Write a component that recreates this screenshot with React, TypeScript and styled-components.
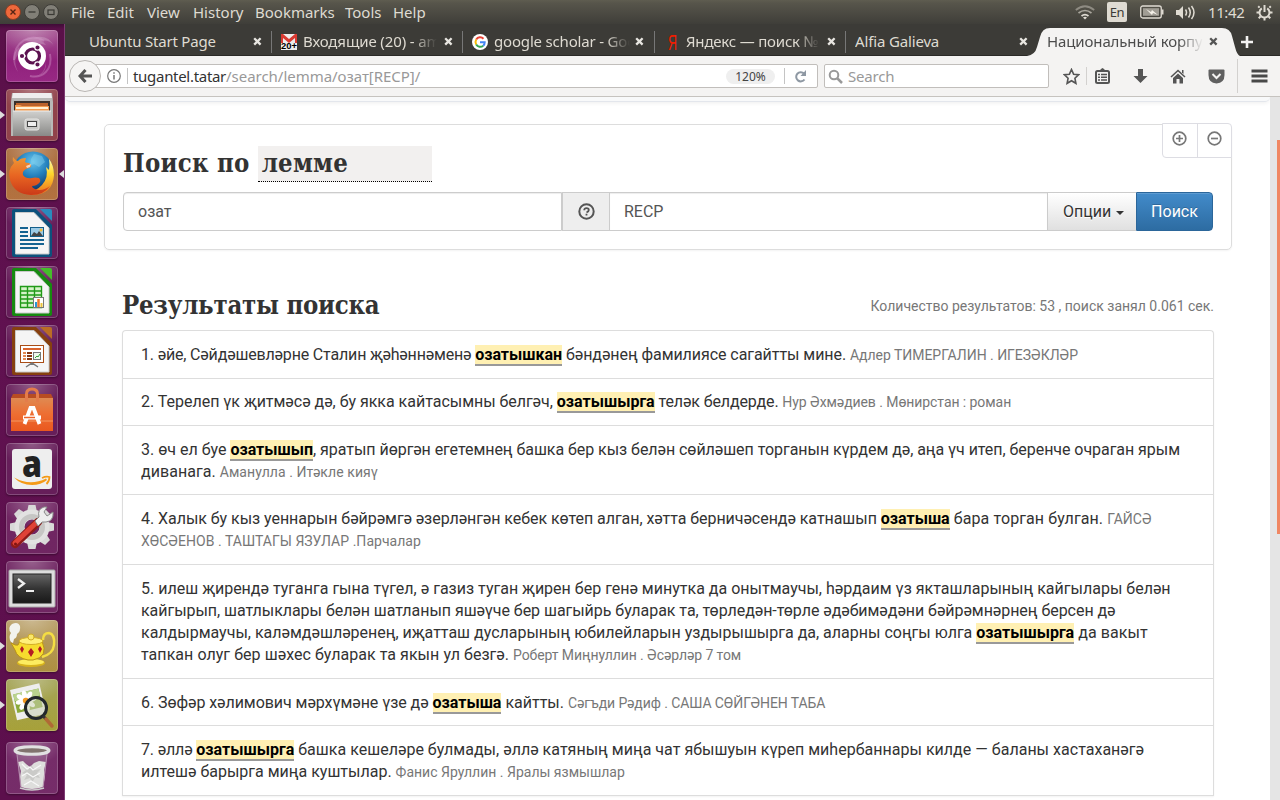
import React from 'react';
import styled, { createGlobalStyle } from 'styled-components';

const Global = createGlobalStyle`
  * { box-sizing: border-box; }
  body { margin: 0; background: #fff; overflow: hidden; font-family: Roboto, sans-serif; }
`;

const ui = '"Noto Sans", "Open Sans", sans-serif';

const Screen = styled.div`
  width: 1280px; height: 800px; display: flex; flex-direction: column; overflow: hidden;
`;
const TopPanel = styled.header`
  height: 24px; flex: none; display: flex; align-items: center; padding: 0 7px 0 5px;
  background: linear-gradient(#5f5d50 0, #57554b 3px, #3f3e39 100%);
  color: #dfdbd2; font: 15px/24px ${ui};
`;
const WindowButtons = styled.div`display: flex; gap: 3px; width: 66px;`;
const MenuItem = styled.span<{ $w: number }>`
  width: ${p => p.$w}px; white-space: nowrap;
`;
const Tray = styled.div`margin-left: auto; display: flex; align-items: center; height: 24px;`;
const LangBadge = styled.span`
  width: 20px; height: 20px; border-radius: 2px; background: #dfdbd2; color: #3c3b37;
  font: 13px/20px ${ui}; text-align: center; margin: 0 13px 0 12px; letter-spacing: -.5px;
`;
const Clock = styled.span`width: 48px; letter-spacing: -.4px;`;
const TrayGap = styled.span<{ $w: number }>`width: ${p => p.$w}px;`;
const Body = styled.div`flex: 1; display: flex; min-height: 0;`;
const Launcher = styled.nav`
  width: 65px; flex: none; padding: 6px 0 0 0; display: flex; flex-direction: column; gap: 7px;
  background: linear-gradient(#3f0c37 0, #5a1049 5px, #601150 40%, #5c0f4c 100%); border-right: 1px solid #7d3b72;
`;
const Slot = styled.div<{ $last?: boolean }>`
  height: 52px; flex: none; display: flex; align-items: center; margin-top: ${p => (p.$last ? 4 : 0)}px;
`;
const Arrow = styled.span<{ $side: 'l' | 'r'; $on?: boolean }>`
  width: 6px; height: 8px; flex: none;
  &::before {
    content: ''; display: ${p => (p.$on ? 'block' : 'none')}; width: 0; height: 0;
    margin-left: ${p => (p.$side === 'r' ? 1 : 0)}px;
    border: 4px solid transparent;
    ${p => (p.$side === 'l' ? 'border-left: 5px solid #ddd; border-right: 0;' : 'border-right: 5px solid #ddd; border-left: 0;')}
  }
`;
const Tile = styled.div<{ $bg: string }>`
  width: 52px; height: 52px; border-radius: 4px; overflow: hidden; flex: none;
  background: radial-gradient(ellipse 60% 45% at 50% 0, rgba(255,255,255,.3), rgba(255,255,255,.04)), ${p => p.$bg};
  box-shadow: inset 0 0 0 1px rgba(255,255,255,.2), 0 1px 2px rgba(0,0,0,.35);
  svg { display: block; }
`;
const Browser = styled.main`flex: 1; min-width: 0; display: flex; flex-direction: column;`;
const TabBar = styled.div`
  height: 32px; flex: none; display: flex; background: #3c3b37; color: #dfdbd2; font: 15px/35px ${ui};
  border-bottom: 1px solid #2b2a27;
`;
const Tab = styled.div<{ $pad: number; $w: number; $sep?: boolean }>`
  width: ${p => p.$w}px; padding-left: ${p => p.$pad}px; display: flex; height: 31px; flex: none; overflow: hidden;
  background: ${p => (p.$sep ? 'linear-gradient(#777,#777) 100% 7px / 1px 22px no-repeat' : 'none')};
`;
const TabIcon = styled.span`display: flex; width: 22px; padding-top: 10px; flex: none;`;
const TabTitle = styled.span<{ $w: number; $fade?: boolean; $ls?: number }>`
  width: ${p => p.$w}px; overflow: hidden; white-space: nowrap; flex: none; letter-spacing: ${p => p.$ls ?? 0}px;
  ${p => (p.$fade ? 'mask-image: linear-gradient(90deg, #000 calc(100% - 24px), transparent);' : '')}
`;
const CloseBox = styled.span<{ $w?: number }>`
  margin-left: auto; width: ${p => p.$w ?? 19}px; padding-top: 13px; display: flex; flex: none;
`;
const ActiveTab = styled.div`
  width: 213px; height: 32px; flex: none; position: relative; color: #4c4c4c; margin-left: -10px;
  > svg { display: block; }
`;
const ActiveLabel = styled.div`
  position: absolute; inset: 0; padding: 0 12px 0 20px; display: flex;
`;
const NewTab = styled.span`padding: 11px 0 0 0; display: flex;`;

const Toolbar = styled.div`
  height: 41px; flex: none; display: flex; align-items: center; background: #f4f3f2; border-bottom: 1px solid #c6c3bf;
  padding: 0 0 0 4px; font: 15px/22px ${ui};
`;
const BackButton = styled.span`
  width: 32px; height: 32px; border-radius: 50%; border: 1px solid #b9b6b3; background: #f6f5f4; z-index: 1;
  display: flex; align-items: center; justify-content: center; flex: none;
`;
const Address = styled.div`
  margin-left: -10px; width: 727px; height: 24px; border: 1px solid #c1bebb; border-radius: 2px; background: #fff;
  display: flex; align-items: center; padding-left: 15px; color: #999; flex: none; white-space: nowrap;
  i { width: 1px; height: 16px; background: #c4c4c4; margin: 0 5px 0 6px; }
  b { color: #333; font-weight: 400; letter-spacing: -.3px; }
`;
const UrlText = styled.span`letter-spacing: -.03px;`;
const Zoom = styled.span`
  margin-left: auto; width: 49px; height: 15px; border-radius: 8px; background: #efefef; color: #444;
  font: 12px/15px ${ui}; text-align: center;
`;
const ReloadDivider = styled.span`width: 1px; height: 16px; background: #c4c4c4; margin: 0 9px 0 9px;`;
const ReloadIcon = styled.svg`margin-right: 10px;`;
const SearchField = styled.div`
  margin-left: 6px; width: 225px; height: 24px; border: 1px solid #c1bebb; border-radius: 2px; background: #fff;
  display: flex; align-items: center; gap: 5px; padding-left: 3px; color: #999; flex: none; letter-spacing: -.2px;
`;
const Tools = styled.div`flex: none; display: flex; align-items: center;`;
const Tool = styled.svg<{ $ml: number }>`margin-left: ${p => p.$ml}px; flex: none;`;
const Rule = styled.span<{ $h: number; $ml: number }>`
  width: 1px; height: ${p => p.$h}px; background: #d3d1cf; margin-left: ${p => p.$ml}px;
`;

const Viewport = styled.div`flex: 1; min-height: 0; display: flex; background: #fff;`;
const Scrollbar = styled.div`
  width: 10px; background: #e5e5e5; padding: 43px 0 0 7px; flex: none;
  &::before { content: ''; display: block; width: 3px; height: 394px; background: #f08763; }
`;
const Page = styled.div`flex: 1; min-width: 0; overflow: hidden; display: flex; flex-direction: column;`;
const NavEdge = styled.div`
  height: 5px; flex: none; background: #f8f9fa; border-bottom: 1px solid #e3e6ec; border-radius: 0 0 5px 5px;
  box-shadow: 0 1px 4px rgba(0,0,0,.07);
`;
const SearchCard = styled.section`
  margin: 22px 38px 0 39px; height: 126px; flex: none; border: 1px solid #ddd; border-radius: 5px;
  box-shadow: 0 1px 2px rgba(0,0,0,.05); padding: 21px 18px 0 18px; position: relative;
`;
const SizeButtons = styled.div`
  position: absolute; right: -1px; top: -2px; height: 35px; width: 70px; display: flex; background: #fff;
  border: 1px solid #dddde3; border-radius: 0 4px 0 4px;
  span { flex: 1; display: flex; justify-content: center; padding-top: 7px; }
  span + span { border-left: 1px solid #dddde3; }
`;
const Heading = styled.h2<{ $ls?: number }>`
  margin: 0; color: #333; font: bold 25.5px/35px "DejaVu Serif Condensed", "DejaVu Serif", serif; font-stretch: condensed;
  letter-spacing: ${p => p.$ls ?? 0.15}px; white-space: nowrap; display: flex;
`;
const ModeSelect = styled.span`
  width: 174px; height: 36px; margin-left: 8px; padding-left: 4px; background: #f2f0ef; border-bottom: 1px dotted #000;
`;
const InputGroup = styled.div`
  display: flex; height: 39px; margin-top: 10px; font-size: 16px; line-height: 37px; color: #555;
  > * { flex: none; }
`;
const Input = styled.div<{ $w: number; $first?: boolean }>`
  width: ${p => p.$w}px; border: 1px solid #ccc; padding-left: 14px; border-radius: ${p => (p.$first ? '4px 0 0 4px' : 0)};
  box-shadow: inset 0 1px 1px rgba(0,0,0,.075);
`;
const Addon = styled.div`
  width: 47px; background: #eee; border: 1px solid #ccc; border-width: 1px 0 1px 1px; display: flex; align-items: center; justify-content: center;
`;
const OptionsButton = styled.div`
  width: 88px; border: 1px solid #ccc; border-width: 1px 0; color: #333; padding-left: 15px; text-shadow: 0 1px 0 #fff;
  background: linear-gradient(#fff, #e0e0e0); display: flex; align-items: center; gap: 5px;
  &::after { content: ''; border: 4px solid transparent; border-top-color: #333; border-bottom: 0; margin-top: 2px; }
`;
const SubmitButton = styled.div`
  width: 77px; border: 1px solid #2b669a; border-radius: 0 4px 4px 0; color: #fff; text-align: center;
  background: linear-gradient(#428bca, #2d6ca2); text-shadow: 0 -1px 0 rgba(0,0,0,.2); box-shadow: inset 0 1px 0 rgba(255,255,255,.15);
`;
const ResultsHead = styled.div`
  margin: 38px 56px 0 57px; height: 42px; flex: none; display: flex; justify-content: space-between; color: #777; font-size: 14px; line-height: 37px;
`;
const ResultsList = styled.section`
  margin: 0 56px 0 57px; border: 1px solid #ddd; border-bottom: 0; border-radius: 4px 4px 0 0; flex: none; box-shadow: 0 1px 2px rgba(0,0,0,.05);
`;
const ResultRow = styled.article<{ $h: number; $pt?: number }>`
  height: ${p => p.$h}px; border-bottom: 1px solid #ddd; padding: ${p => p.$pt ?? 0}px 18px 0; display: flex; flex-direction: column; justify-content: center;
`;
const Line = styled.p<{ $ls?: number }>`
  margin: 0; font-size: 16px; line-height: 22px; color: #333; white-space: pre; letter-spacing: ${p => p.$ls ?? 0}px;
`;
const Run = styled.span<{ $ls: number }>`letter-spacing: ${p => p.$ls}px;`;
const Hit = styled.mark`background: #fff0b3; color: #000; font-weight: 700; border-bottom: 2px solid #999; letter-spacing: 0;`;
const Source = styled.small<{ $ls?: number }>`font-size: 14px; color: #777; letter-spacing: ${p => p.$ls ?? 0}px;`;

const Close = ({ c }: { c: string }) => (
  <svg width="9" height="9" viewBox="0 0 9 9"><path d="M1.2 1.2l6.4 6.4M7.6 1.2L1.2 7.6" stroke={c} strokeWidth="2.3" /></svg>
);

const Doc = ({ c, l, children }: { c: string; l: string; children: React.ReactNode }) => (
  <svg width="52" height="52" viewBox="0 0 52 52">
    <path d="M8 2h22l16 16v30q0 2-2 2H8q-2 0-2-2V4q0-2 2-2z" fill={c} />
    <path d="M34 2h10q2 0 2 2v10z" fill={l} />
    <path d="M9.500 5.500h18.500l15 15.500v26H9.500z" fill="#f5f5f5" stroke="#c9c9c9" />
    {children}
  </svg>
);

const gearTeeth = [0, 45, 90, 135, 180, 225, 270, 315];

const icons: { bg: string; left?: boolean; right?: boolean; art: React.ReactNode }[] = [
  {
    bg: 'linear-gradient(#a3508f, #8c1877 60%, #94207f)', art: (
      <svg width="52" height="52" viewBox="0 0 52 52" fill="none">
        <path d="M26 8q17-5 22 9-3-9-17-6M13 17Q2 28 12 42q-7-15 4-20M40 30q0 17-18 18 16-1 18-12M18 10Q30 3 40 15" fill="#fff" opacity=".2" />
        <path d="M8 30C8 12 24 2 38 11M44 24c3 15-7 25-20 22" stroke="#d89bce" strokeWidth="2" opacity=".4" />
        <circle cx="26" cy="26" r="14" fill="#fff" />
        <circle cx="26.500" cy="26" r="7" stroke="#5c1250" strokeWidth="3.200" />
        <g stroke="#fff" strokeWidth="1.200"><path d="M20 26h-7M29.500 20l4-6M29.500 32l4 6" />
          <circle cx="16" cy="26" r="2.700" fill="#5c1250" /><circle cx="31.500" cy="17.500" r="2.700" fill="#5c1250" /><circle cx="31.500" cy="34.500" r="2.700" fill="#5c1250" /></g>
      </svg>),
  },
  {
    bg: '#8c3b44', left: true, art: (
      <svg width="52" height="52" viewBox="0 0 52 52">
        <defs><linearGradient id="cab" x2="0" y2="1"><stop stopColor="#d0d0ce" /><stop offset="1" stopColor="#898987" /></linearGradient></defs>
        <path d="M6 4h40l1 9v34H5V13z" fill="#b9b9b7" /><path d="M7 4h38l1 5H6z" fill="#eee" />
        <path d="M8 12h36v12H8z" fill="#3b302a" /><path d="M10 14h32v6H10z" fill="#ba622c" /><path d="M9 16h5l2 1h27v6H9z" fill="#f29b51" /><path d="M10 18h32v2H10z" fill="#fff1d5" />
        <path d="M7 22h38v25H7z" fill="url(#cab)" /><path d="M7 22h38" stroke="#eee" />
        <rect x="19" y="30" width="14" height="11" rx="2" fill="#c8c8c6" stroke="#e7e7e5" /><rect x="21.500" y="32.500" width="9" height="5" fill="#eee" stroke="#444" />
      </svg>),
  },
  {
    bg: 'linear-gradient(#a66736, #b06c38)', left: true, right: true, art: (
      <svg width="52" height="52" viewBox="0 0 52 52">
        <defs>
          <radialGradient id="globe" cx=".5" cy=".25" r=".7"><stop stopColor="#67c4ec" /><stop offset=".5" stopColor="#2380bd" /><stop offset="1" stopColor="#123667" /></radialGradient>
          <linearGradient id="fox" x2="0" y2="1"><stop stopColor="#ee9a36" /><stop offset=".5" stopColor="#e86522" /><stop offset="1" stopColor="#cb3a18" /></linearGradient>
          <linearGradient id="tail" x2="0" y2="1"><stop stopColor="#fff6a8" /><stop offset=".4" stopColor="#ffd72d" /><stop offset="1" stopColor="#ee6c1d" /></linearGradient>
        </defs>
        <circle cx="27" cy="24" r="20.500" fill="url(#globe)" />
        <path d="M28 6l8 2 3 6-6 5-5-3-4 2 1-7z" fill="#8ed8ef" opacity=".4" />
        <path d="M43 11q5 6 5 16Q47 46 27 47q-8 0-14-5 15 4 23-5 7-8 4-18l3 3q1-6 0-11z" fill="url(#tail)" />
        <path d="M7 8q-1 4 1 7Q1 22 4 32q4 14 21 15 13 0 19-9-8 6-15 3-3-1-3-3 5 0 8-4 1-2-1-4-4-1-7 0-6 1-9-3-1-4 3-6l5-2q1-2-2-4-3 0-4-1l1-4q-6 0-8 3-2 0-5-4z" fill="url(#fox)" />
        <path d="M20 18l5-2-1 3-3 1z" fill="#f7d5bd" />
      </svg>),
  },
  {
    bg: '#601553', art: (
      <Doc c="#0c517c" l="#2a8bbd">
        <path d="M14 21h8M14 25h8M14 29h8M14 33h24M14 37h24M14 41h18" stroke="#156391" strokeWidth="2" />
        <rect x="24.500" y="20.500" width="13" height="9" fill="#9ccbe6" stroke="#145f8a" /><path d="M25 29l3-4 3 2 2-3 4 5z" fill="#444" /><circle cx="35" cy="23" r="1.500" fill="#f4bb36" />
      </Doc>),
  },
  {
    bg: '#601553', art: (
      <Doc c="#168a10" l="#45bd2b">
        <path d="M14.500 20.500h21v21h-21zM14 25h22M14 29h22M14 33h22M14 37h22M21.500 21v20M28.500 21v20" fill="#d6f3c9" stroke="#219a18" strokeWidth="1.400" />
        <rect x="27.500" y="31.500" width="10" height="10" fill="#fff" stroke="#777" /><path d="M30 36v5" stroke="#2997d5" strokeWidth="2" /><path d="M32.500 33v8" stroke="#ef792b" strokeWidth="2.500" /><path d="M35.500 37v4" stroke="#ebc33a" strokeWidth="2" />
      </Doc>),
  },
  {
    bg: '#601553', art: (
      <Doc c="#86400f" l="#ba6d25">
        <rect x="14.500" y="20.500" width="23" height="17" fill="#fff" stroke="#a94d16" /><path d="M17 24h18" stroke="#d9642d" strokeWidth="2" />
        <path d="M17 28h3M17 31h3M17 34h3" stroke="#e28952" strokeWidth="2" /><path d="M21 28h5M21 31h5M21 34h5" stroke="#853812" strokeWidth="2" />
        <rect x="27.500" y="27.500" width="7" height="7" fill="#eef8ec" stroke="#777" /><path d="M29 33l2-2 1 1 2-3" stroke="#35a23a" fill="none" /><path d="M20 42l6-4 6 4M26 38v2" stroke="#777" strokeWidth="1.500" fill="none" />
      </Doc>),
  },
  {
    bg: '#601553', art: (
      <svg width="52" height="52" viewBox="0 0 52 52">
        <defs><linearGradient id="bag" x2="0" y2="1"><stop stopColor="#df8a52" /><stop offset=".5" stopColor="#ee6d31" /><stop offset="1" stopColor="#e9581f" /></linearGradient></defs>
        <path d="M7 10h38l2 4H5z" fill="#b84c22" /><path d="M5 14h42v33H5z" fill="url(#bag)" /><path d="M5 37h42" stroke="#f29762" />
        <path d="M20.500 18V10q0-5 5.500-5t5.500 5v8" fill="none" stroke="#e47c4b" strokeWidth="3" />
        <path d="M18.500 40l6-16h3l6 16" fill="none" stroke="#fff" strokeWidth="3.800" /><path d="M17 31.500h18v4H17z" fill="#fff" /><path d="M18 33.500h11" stroke="#ed642a" strokeWidth="1.400" />
      </svg>),
  },
  {
    bg: '#601553', art: (
      <svg width="52" height="52" viewBox="0 0 52 52">
        <rect x="6" y="6" width="40" height="40" rx="3" fill="#eee" /><text x="16" y="33.500" fontFamily="Open Sans" fontWeight="800" fontSize="37" textLength="20" lengthAdjust="spacingAndGlyphs" fill="#222">a</text>
        <path d="M8 34.500q16 9 32 1l1 1.500q-6 5-15 5-11 0-18-7.500z" fill="#f49a17" /><path d="M36 35q4-2 7.500-1 0 4-3 7" fill="none" stroke="#f49a17" strokeWidth="1.800" />
      </svg>),
  },
  {
    bg: '#6a1d5c', art: (
      <svg width="52" height="52" viewBox="0 0 52 52">
        <g fill="#d9d9d8">{gearTeeth.map(a => <path key={a} d="M21 10l1.500-7h7l1.500 7z" transform={`rotate(${a} 26 25)`} />)}</g>
        <circle cx="26" cy="25" r="12.500" fill="none" stroke="#e2e2e1" strokeWidth="10" /><circle cx="26" cy="25" r="10.500" fill="none" stroke="#c6c6c4" strokeWidth="5" />
        <path d="M9 42L32 20" stroke="#8f1a18" strokeWidth="8" strokeLinecap="round" /><path d="M9 41L31 20" stroke="#df4237" strokeWidth="5" strokeLinecap="round" />
        <path d="M29 19l4-4q-2-8 5-10l3 0-3 5 3 4 6-4q1 9-7 10l-4 0-4 4z" fill="#eee" stroke="#8a8a8a" /><circle cx="9.500" cy="42" r="1.500" fill="#7e1410" />
      </svg>),
  },
  {
    bg: '#6a1d5c', art: (
      <svg width="52" height="52" viewBox="0 0 52 52">
        <defs><linearGradient id="term" x2="0" y2="1"><stop stopColor="#666" /><stop offset=".5" stopColor="#343434" /><stop offset="1" stopColor="#181818" /></linearGradient></defs>
        <rect x="3" y="9" width="46" height="37" rx="1" fill="#ddd" stroke="#aaa" /><rect x="7" y="13" width="38" height="29" fill="url(#term)" stroke="#222" />
        <path d="M12 18l6 4.500-6 4.500" fill="none" stroke="#eee" strokeWidth="2.300" /><path d="M20 30h8" stroke="#eee" strokeWidth="2" />
      </svg>),
  },
  {
    bg: 'linear-gradient(#b59a61, #aa8b38)', left: true, art: (
      <svg width="52" height="52" viewBox="0 0 52 52">
        <path d="M5 22q-3-5 0-9-4-5 1-9 6-3 8 2 1 5-3 8 0 4-3 5l-1 4z" fill="#f2f2ee" />
        <path d="M37 20q0-7 6-7 6 1 5 12-1 9-12 12" fill="none" stroke="#f4dd43" strokeWidth="2.500" />
        <ellipse cx="25" cy="43" rx="14" ry="4" fill="#d8b31c" /><ellipse cx="25" cy="42" rx="13" ry="3" fill="#fcec60" />
        <path d="M5 23q5 3 7 2l2-4q11-6 22 0 7 16-9 19h-5Q11 38 9 30z" fill="#f6dc2e" stroke="#ba9216" /><ellipse cx="25" cy="21" rx="12" ry="3.500" fill="#fff07a" stroke="#d3ae24" /><circle cx="25" cy="17" r="3" fill="#f9e86b" stroke="#d3ae24" />
        <path d="M16 26l2 3-2 4-2-4zM25 28l3 4-3 5-3-5zM34 26l2 3-2 4-2-4z" fill="#b51c24" />
      </svg>),
  },
  {
    bg: 'linear-gradient(#a0a052, #a39d31)', left: true, art: (
      <svg width="52" height="52" viewBox="0 0 52 52">
        <g transform="rotate(-13 23 22)"><path d="M7 7h30v31H7z" fill="#eee" /><path d="M9 12h26v19H9z" fill="#89a93a" /><path d="M9 12h26v7H9z" fill="#b9d38f" />
          <g fill="#fff">{gearTeeth.map(a => <ellipse key={a} cx="20" cy="15.500" rx="2.500" ry="5" transform={`rotate(${a} 20 21)`} />)}</g><circle cx="20" cy="21" r="3" fill="#f29a22" /></g>
        <circle cx="30" cy="29" r="10.500" fill="#c8d0b0" fillOpacity=".55" stroke="#23282b" strokeWidth="3" /><path d="M37 37l3 3" stroke="#333" strokeWidth="3" /><path d="M40 40l6 7" stroke="#b06a35" strokeWidth="3.500" strokeLinecap="round" />
      </svg>),
  },
  {
    bg: '#702463', art: (
      <svg width="52" height="52" viewBox="0 0 52 52">
        <path d="M10 8h32l-4 36q-12 5-24 0z" fill="#ddd" opacity=".2" />
        <path d="M12 20l5-1 3 3 4 3 4-4 5-2 7 1-2 8 1 6-2 11q-11 4-22 0l-1-10 1-6z" fill="#dededc" />
        <path d="M15 24l5 4-4 3 5 2-3 5 6-2 2 5 3-6 5 1-3-5 4-4-6 1-4-5-3 5z" fill="#bcbcba" opacity=".6" />
        <path d="M16 22l5 5 3-2 3 3 8-5M16 34l5-3 6 4 7-4M18 43l7-4 8 5" fill="none" stroke="#f8f8f8" strokeWidth="1.200" />
        <path d="M11 12l4 33M41 12l-4 33" stroke="#b58fae" fill="none" />
        <ellipse cx="26" cy="8.500" rx="17" ry="3.800" fill="#81736e" stroke="#e1e1e1" strokeWidth="3" /><path d="M14 46q12 4 24 0" stroke="#ccc" fill="none" strokeWidth="1.600" />
      </svg>),
  },
];

const menus: [string, number][] = [['File', 36], ['Edit', 40], ['View', 46], ['History', 62], ['Bookmarks', 90], ['Tools', 48], ['Help', 40]];

const ZoomGlyph = ({ plus }: { plus?: boolean }) => (
  <svg width="15" height="15" viewBox="0 0 15 15" fill="none" stroke="#777" strokeWidth="1.700"><circle cx="7.500" cy="7.500" r="6.300" /><path d={plus ? 'M4 7.500h7M7.500 4v7' : 'M4 7.500h7'} /></svg>
);

export default function App() {
  return (
    <Screen>
      <Global />
      <TopPanel>
        <WindowButtons>
          <svg width="16" height="16" viewBox="0 0 16 16"><circle cx="8" cy="8" r="7.500" fill="#ee683b" stroke="#8b3d23" /><path d="M5.500 5.500l5 5M10.500 5.500l-5 5" stroke="#552414" strokeWidth="1.400" /></svg>
          <svg width="16" height="16" viewBox="0 0 16 16"><circle cx="8" cy="8" r="7.500" fill="#817f77" stroke="#3e3d38" /><path d="M4.500 8h7" stroke="#3a3934" strokeWidth="1.300" /></svg>
          <svg width="16" height="16" viewBox="0 0 16 16"><circle cx="8" cy="8" r="7.500" fill="#817f77" stroke="#3e3d38" /><rect x="5" y="6" width="6" height="4.500" fill="none" stroke="#3a3934" strokeWidth="1.200" /></svg>
        </WindowButtons>
        {menus.map(m => <MenuItem key={m[0]} $w={m[1]}>{m[0]}</MenuItem>)}
        <Tray>
          <svg width="20" height="15" viewBox="0 0 20 15" fill="none"><path d="M.8 5q9.200-7.500 18.400 0" stroke="#8e8b82" strokeWidth="1.700" /><path d="M3.500 8q6.500-5 13 0" stroke="#aaa79e" strokeWidth="1.700" /><path d="M6.500 11q3.500-2.700 7 0" stroke="#dfdbd2" strokeWidth="1.700" /><path d="M8 12.500q2-1.500 4 0l-2 2z" fill="#dfdbd2" /></svg>
          <LangBadge>En</LangBadge>
          <svg width="24" height="14" viewBox="0 0 24 14"><rect x=".75" y="1" width="20.500" height="12" rx="2" fill="none" stroke="#dfdbd2" strokeWidth="1.300" /><path d="M3 3.200h16v7.600H3z" fill="#a09d94" /><path d="M22.500 4.500v5" stroke="#dfdbd2" strokeWidth="2" /><path d="M6 4l5 3 1-2 6 5-5-2-1 2z" fill="#f4f1e8" /></svg>
          <TrayGap $w={11} />
          <svg width="21" height="15" viewBox="0 0 21 15" fill="none" stroke="#dfdbd2" strokeWidth="1.500"><path d="M1 5h3l4-4v13l-4-4H1z" fill="#dfdbd2" stroke="none" /><path d="M10.500 4.500q2 3 0 6M13.500 2.500q3.500 5 0 10M16.500 1q5 6.500 0 13" /></svg>
          <TrayGap $w={12} />
          <Clock>11:42</Clock>
          <svg width="17" height="17" viewBox="0 0 17 17" fill="none" stroke="#dfdbd2"><path d="M5.800 4.300a5 5 0 1 0 5.400 0" strokeWidth="2" /><path d="M8.500 1v7" strokeWidth="2" /><path d="M3.600 3.600L2.200 2.200M13.400 3.600l1.400-1.400M3 8.500H.5M14 8.500h2.500M4.500 12.500l-1.800 1.800M12.500 12.500l1.800 1.800M8.500 14v2.500" strokeWidth="2" /></svg>
        </Tray>
      </TopPanel>
      <Body>
        <Launcher>
          {icons.map((it, i) => (
            <Slot key={i} $last={i === icons.length - 1}>
              <Arrow $side="l" $on={it.left} /><Tile $bg={it.bg}>{it.art}</Tile><Arrow $side="r" $on={it.right} />
            </Slot>
          ))}
        </Launcher>
        <Browser>
          <TabBar>
            <Tab $w={207} $pad={24} $sep><TabTitle $w={140} $ls={-.2}>Ubuntu Start Page</TabTitle><CloseBox><Close c="#e8e6e1" /></CloseBox></Tab>
            <Tab $w={191} $pad={9} $sep>
              <TabIcon><svg width="16" height="16" viewBox="0 0 16 16"><path d="M0 0h16v16H0z" fill="#eee" /><path d="M0 0h2l6 5 6-5h2v9h-2V4L8 9 2 4v5H0z" fill="#d93a32" /><text x="0" y="15" fontFamily="Liberation Sans" fontSize="9" fontWeight="700" textLength="16" lengthAdjust="spacingAndGlyphs">20+</text></svg></TabIcon>
              <TabTitle $w={134} $fade $ls={-.12}>Входящие (20) - am</TabTitle><CloseBox><Close c="#e8e6e1" /></CloseBox>
            </Tab>
            <Tab $w={192} $pad={9} $sep>
              <TabIcon><svg width="16" height="16" viewBox="0 0 16 16"><circle cx="8" cy="8" r="8" fill="#fff" /><g fill="none" strokeWidth="2"><path d="M4.200 5.500A4.700 4.700 0 0 1 11.500 4.700" stroke="#e94235" /><path d="M4.200 5.500a5 5 0 0 0 0 5" stroke="#fbbc05" /><path d="M4.200 10.500a4.700 4.700 0 0 0 7 1.200" stroke="#34a853" /><path d="M11.200 11.700q1.500-1.200 1.500-3.500H8" stroke="#4285f4" /></g></svg></TabIcon>
              <TabTitle $w={136} $fade $ls={-.18}>google scholar - Goo</TabTitle><CloseBox $w={20}><Close c="#e8e6e1" /></CloseBox>
            </Tab>
            <Tab $w={191} $pad={9} $sep>
              <TabIcon><svg width="16" height="16" viewBox="0 0 16 16"><text x="4" y="16" fontFamily="Liberation Sans" fontSize="22" textLength="9" lengthAdjust="spacingAndGlyphs" fill="#f21d00">Я</text></svg></TabIcon>
              <TabTitle $w={134} $fade $ls={-.2}>Яндекс — поиск №</TabTitle><CloseBox><Close c="#e8e6e1" /></CloseBox>
            </Tab>
            <Tab $w={191} $pad={9}><TabTitle $w={120} $ls={-.15}>Alfia Galieva</TabTitle><CloseBox $w={18}><Close c="#e8e6e1" /></CloseBox></Tab>
            <ActiveTab>
              <svg width="213" height="32" viewBox="0 0 213 32"><path d="M0 32q8-1 10-9l3-10q2-9 10-9h172q8 0 10 8l3 11q2 8 5 9z" fill="#f4f3f2" /></svg>
              <ActiveLabel><TabTitle $w={156} $fade $ls={-.12}>Национальный корпу</TabTitle><CloseBox><Close c="#555" /></CloseBox></ActiveLabel>
            </ActiveTab>
            <NewTab><svg width="14" height="14" viewBox="0 0 14 14"><path d="M7 1v12M1 7h12" stroke="#f4f3f2" strokeWidth="2.600" /></svg></NewTab>
          </TabBar>
          <Toolbar>
            <BackButton><svg width="14" height="14" viewBox="0 0 14 14" fill="none" stroke="#555" strokeWidth="3"><path d="M7.500 1L2 7l5.500 6M2.500 7H14" /></svg></BackButton>
            <Address>
              <svg width="14" height="14" viewBox="0 0 14 14" fill="none" stroke="#777"><circle cx="7" cy="7" r="6.300" strokeWidth="1.200" /><path d="M7 6v4.500M7 3.200v1.500" strokeWidth="1.500" /></svg>
              <i /><UrlText><b>tugantel.tatar</b>/search/lemma/озат[RECP]/</UrlText>
              <Zoom>120%</Zoom><ReloadDivider />
              <ReloadIcon width="13" height="13" viewBox="0 0 13 13" fill="none"><path d="M10.500 9.500A4.600 4.600 0 1 1 10 3.500" stroke="#8e98a3" strokeWidth="2" /><path d="M12 0v6H6.500z" fill="#8e98a3" /></ReloadIcon>
            </Address>
            <SearchField><svg width="15" height="15" viewBox="0 0 15 15" fill="none" stroke="#999" strokeWidth="2"><circle cx="6" cy="6" r="4.300" /><path d="M9 9l5 5" strokeWidth="2.500" /></svg>Search</SearchField>
            <Tools>
              <Tool $ml={14} width="17" height="17" viewBox="0 0 17 17"><path d="M8.500 1.500l2.100 4.700 5.100.5-3.800 3.500 1 5.100-4.400-2.600-4.400 2.600 1-5.100L1.300 6.700l5.100-.5z" fill="none" stroke="#555" strokeWidth="1.600" /></Tool>
              <Rule $h={18} $ml={6} />
              <Tool $ml={8} width="15" height="16" viewBox="0 0 15 16"><rect x="1" y="3" width="13" height="12" rx="1.500" fill="none" stroke="#555" strokeWidth="2" /><path d="M5 3q0-2 2.500-3Q10 1 10 3z" fill="#555" /><path d="M3 6.500h2M6 6.500h6M3 9.200h2M6 9.200h6M3 12h2M6 12h6" stroke="#555" strokeWidth="1.500" /></Tool>
              <Tool $ml={23} width="15" height="15" viewBox="0 0 15 15"><path d="M5 0h5v7h4.500L7.500 14 .5 7H5z" fill="#555" /></Tool>
              <Tool $ml={22} width="16" height="15" viewBox="0 0 16 15"><path d="M1 8l7-6.500L15 8" fill="none" stroke="#555" strokeWidth="1.600" /><path d="M8 4.500l5 4.500v5.500H9.500V10h-3v4.500H3V9z" fill="#555" /><path d="M12 1h1.500v4L12 3.500z" fill="#555" /></Tool>
              <Tool $ml={22} width="17" height="15" viewBox="0 0 17 15"><path d="M1.500.5h14q1 0 1 1V6q0 8-8 8.500Q.5 14 .5 6V1.500q0-1 1-1z" fill="#606060" /><path d="M4.500 5l4 4 4-4" fill="none" stroke="#f4f3f2" strokeWidth="2" /></Tool>
              <Rule $h={34} $ml={12} />
              <Tool $ml={13} width="17" height="14" viewBox="0 0 17 14"><path d="M.5 2h16M.5 7h16M.5 12h16" stroke="#484848" strokeWidth="2.800" /></Tool>
            </Tools>
          </Toolbar>
          <Viewport>
            <Page>
              <NavEdge />
              <SearchCard>
                <SizeButtons><span><ZoomGlyph plus /></span><span><ZoomGlyph /></span></SizeButtons>
                <Heading $ls={.25}>Поиск по<ModeSelect>лемме</ModeSelect></Heading>
                <InputGroup>
                  <Input $w={439} $first>озат</Input>
                  <Addon><svg width="17" height="17" viewBox="0 0 17 17" fill="none" stroke="#555" strokeWidth="2"><circle cx="8.500" cy="8.500" r="7.200" /><path d="M6.200 7.200q0-2 2.300-2t2.300 1.800Q10.800 8.500 8.500 9.500M8.500 10.800v1.700" strokeWidth="1.800" /></svg></Addon>
                  <Input $w={439}>RECP</Input>
                  <OptionsButton>Опции</OptionsButton>
                  <SubmitButton>Поиск</SubmitButton>
                </InputGroup>
              </SearchCard>
              <ResultsHead><Heading as="h3" $ls={-.25}>Результаты поиска</Heading><span>Количество результатов: 53 , поиск занял 0.061 сек.</span></ResultsHead>
              <ResultsList>
                <ResultRow $h={48}>
                  <Line><Run $ls={-.17}>1. әйе, Сәйдәшевләрне Сталин җәһәннәменә </Run><Hit>озатышкан</Hit><Run $ls={-.06}> бәндәнең фамилиясе сагайтты мине. </Run><Source $ls={-.03}>Адлер ТИМЕРГАЛИН . ИГЕЗӘКЛӘР</Source></Line>
                </ResultRow>
                <ResultRow $h={47}>
                  <Line><Run $ls={-.02}>2. Терелеп үк җитмәсә дә, бу якка кайтасымны белгәч, </Run><Hit>озатышырга</Hit><Run $ls={-.12}> теләк белдерде. </Run><Source $ls={-.07}>Нур Әхмәдиев . Мөнирстан : роман</Source></Line>
                </ResultRow>
                <ResultRow $h={69} $pt={2}>
                  <Line>3. өч ел буе <Hit>озатышып</Hit><Run $ls={-.045}>, яратып йөргән егетемнең башка бер кыз белән сөйләшеп торганын күрдем дә, аңа үч итеп, беренче очраган ярым</Run></Line>
                  <Line $ls={.04}>диванага. <Source $ls={.08}>Аманулла . Итәкле кияү</Source></Line>
                </ResultRow>
                <ResultRow $h={70}>
                  <Line><Run $ls={-.045}>4. Халык бу кыз уеннарын бәйрәмгә әзерләнгән кебек көтеп алган, хәтта берничәсендә катнашып </Run><Hit>озатыша</Hit><Run $ls={.1}> бара торган булган. </Run><Source>ГАЙСӘ</Source></Line>
                  <Line><Source $ls={.03}>ХӨСӘЕНОВ . ТАШТАГЫ ЯЗУЛАР .Парчалар</Source></Line>
                </ResultRow>
                <ResultRow $h={114}>
                  <Line $ls={.008}>5. илеш җирендә туганга гына түгел, ә газиз туган җирен бер генә минутка да онытмаучы, һәрдаим үз якташларының кайгылары белән</Line>
                  <Line $ls={-.04}>кайгырып, шатлыклары белән шатланып яшәүче бер шагыйрь буларак та, төрледән-төрле әдәбимәдәни бәйрәмнәрнең берсен дә</Line>
                  <Line>калдырмаучы, каләмдәшләренең, иҗатташ дусларының юбилейларын уздырышырга да, аларны соңгы юлга <Hit>озатышырга</Hit><Run $ls={.08}> да вакыт</Run></Line>
                  <Line $ls={.05}>тапкан олуг бер шәхес буларак та якын ул безгә. <Source $ls={-.08}>Роберт Миңнуллин . Әсәрләр 7 том</Source></Line>
                </ResultRow>
                <ResultRow $h={47} $pt={1}>
                  <Line><Run $ls={-.05}>6. Зөфәр хәлимович мәрхүмәне үзе дә </Run><Hit>озатыша</Hit> кайтты. <Source $ls={-.09}>Сәгъди Рәдиф . САША СӨЙГӘНЕН ТАБА</Source></Line>
                </ResultRow>
                <ResultRow $h={70}>
                  <Line><Run $ls={-.15}>7. әллә </Run><Hit>озатышырга</Hit><Run $ls={.02}> башка кешеләре булмады, әллә катяның миңа чат ябышуын күреп миһербаннары килде — баланы хастаханәгә</Run></Line>
                  <Line>илтешә барырга миңа куштылар. <Source>Фанис Яруллин . Яралы язмышлар</Source></Line>
                </ResultRow>
              </ResultsList>
            </Page>
            <Scrollbar />
          </Viewport>
        </Browser>
      </Body>
    </Screen>
  );
}
